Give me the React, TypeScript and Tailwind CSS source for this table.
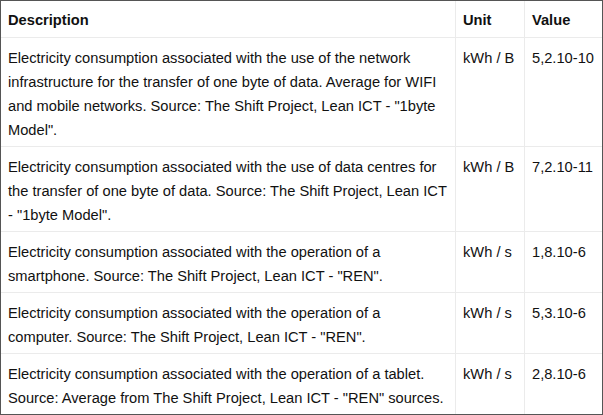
import React from "react";

const rows: [React.ReactNode, string, string][] = [
  [
    'Electricity consumption associated with the use of the network infrastructure for the transfer of one byte of data. Average for WIFI and mobile networks. Source: The Shift Project, Lean ICT - "1byte Model".',
    "kWh / B",
    "5,2.10-10",
  ],
  [
    'Electricity consumption associated with the use of data centres for the transfer of one byte of data. Source: The Shift Project, Lean ICT - "1byte Model".',
    "kWh / B",
    "7,2.10-11",
  ],
  [
    'Electricity consumption associated with the operation of a smartphone. Source: The Shift Project, Lean ICT - "REN".',
    "kWh / s",
    "1,8.10-6",
  ],
  [
    <>
      Electricity consumption associated with the operation of a
      <br />
      computer. Source: The Shift Project, Lean ICT - "REN".
    </>,
    "kWh / s",
    "5,3.10-6",
  ],
  [
    'Electricity consumption associated with the operation of a tablet. Source: Average from The Shift Project, Lean ICT - "REN" sources.',
    "kWh / s",
    "2,8.10-6",
  ],
];

export default function App() {
  return (
    <div
      className="w-[603px] h-[415px] border border-[#555] bg-white overflow-hidden text-[14.66px] leading-[24px] text-[#111]"
      style={{ fontFamily: '"Liberation Sans", Arial, sans-serif' }}
    >
      <div className="grid grid-cols-[455px_69px_77px]">
        <div className="px-[7px] pt-[7px] pb-[5px] font-bold border-r border-b border-[#ebebeb]">Description</div>
        <div className="px-[7px] pt-[7px] pb-[5px] font-bold border-r border-b border-[#ebebeb]">Unit</div>
        <div className="px-[7px] pt-[7px] pb-[5px] font-bold border-b border-[#ebebeb]">Value</div>
        {rows.map((r, i) => {
          const last = i === rows.length - 1;
          const b = last ? "" : " border-b";
          return (
            <React.Fragment key={i}>
              <div className={"pl-[7px] pr-[4px] pt-[8px] pb-[4px] border-r border-[#ebebeb]" + b}>{r[0]}</div>
              <div className={"px-[7px] pt-[8px] pb-[4px] border-r border-[#ebebeb] whitespace-nowrap" + b}>{r[1]}</div>
              <div className={"px-[7px] pt-[8px] pb-[4px] border-[#ebebeb] whitespace-nowrap" + b}>{r[2]}</div>
            </React.Fragment>
          );
        })}
      </div>
    </div>
  );
}
